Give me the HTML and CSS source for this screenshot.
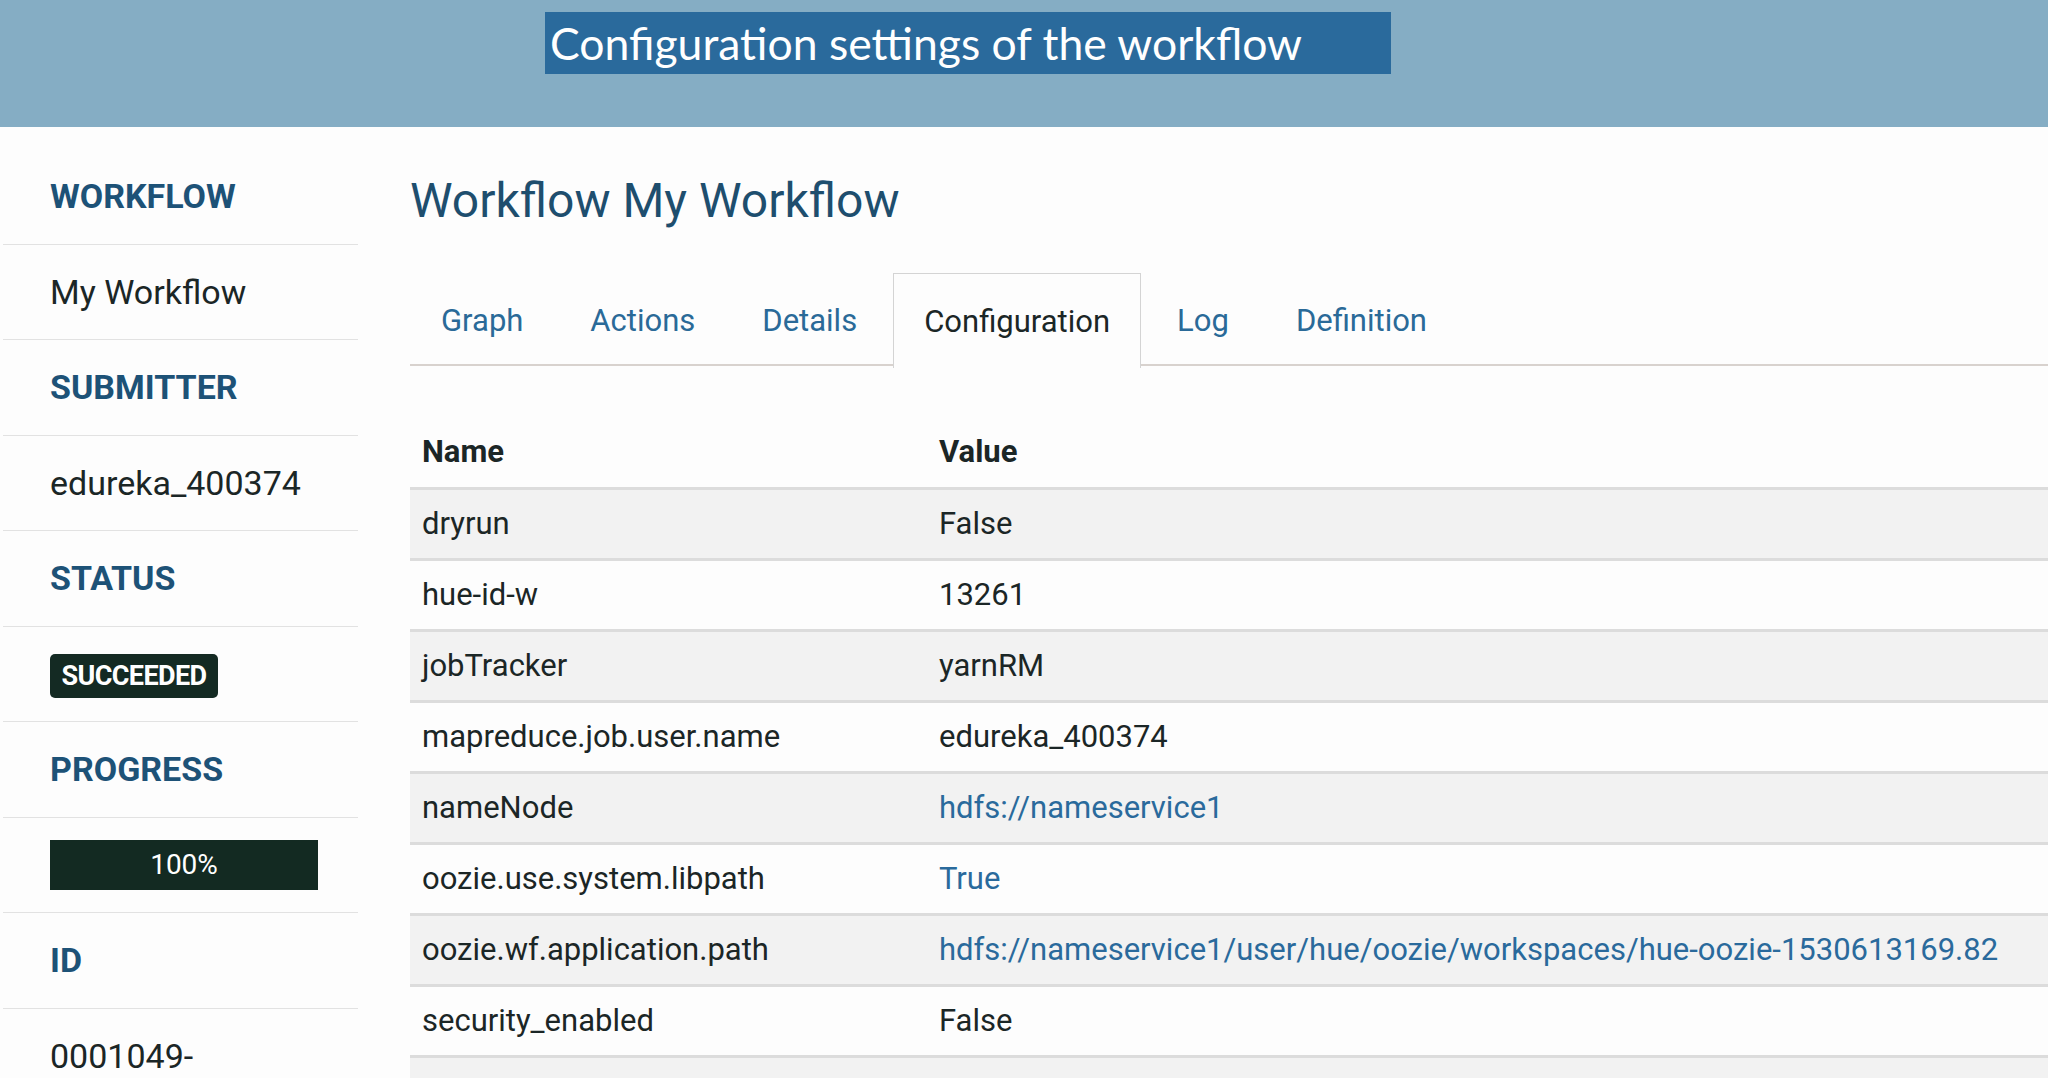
FILE: index.html
```html
<!DOCTYPE html>
<html lang="en">
<head>
<meta charset="utf-8">
<title>Workflow My Workflow</title>
<link rel="stylesheet" href="styles.css">
</head>
<body>
<header class="banner">
  <div class="callout">Configuration settings of the workflow</div>
</header>
<div class="page">
  <aside class="sidebar">
    <div class="item label">WORKFLOW</div>
    <div class="item value">My Workflow</div>
    <div class="item label">SUBMITTER</div>
    <div class="item value">edureka_400374</div>
    <div class="item label">STATUS</div>
    <div class="item badge-row"><span class="badge">SUCCEEDED</span></div>
    <div class="item label">PROGRESS</div>
    <div class="item"><div class="progress">100%</div></div>
    <div class="item label">ID</div>
    <div class="item value">0001049-</div>
  </aside>
  <main class="main">
    <h1 class="title">Workflow My Workflow</h1>
    <ul class="tabs">
      <li class="tab">Graph</li>
      <li class="tab">Actions</li>
      <li class="tab">Details</li>
      <li class="tab active">Configuration</li>
      <li class="tab">Log</li>
      <li class="tab">Definition</li>
    </ul>
    <table class="conf">
      <thead>
        <tr><th class="col-name">Name</th><th>Value</th></tr>
      </thead>
      <tbody>
        <tr><td>dryrun</td><td>False</td></tr>
        <tr><td>hue-id-w</td><td>13261</td></tr>
        <tr><td>jobTracker</td><td>yarnRM</td></tr>
        <tr><td>mapreduce.job.user.name</td><td>edureka_400374</td></tr>
        <tr><td>nameNode</td><td><a class="link">hdfs://nameservice1</a></td></tr>
        <tr><td>oozie.use.system.libpath</td><td><a class="link">True</a></td></tr>
        <tr><td>oozie.wf.application.path</td><td><a class="link">hdfs://nameservice1/user/hue/oozie/workspaces/hue-oozie-1530613169.82</a></td></tr>
        <tr><td>security_enabled</td><td>False</td></tr>
        <tr><td></td><td></td></tr>
      </tbody>
    </table>
  </main>
</div>
</body>
</html>
```

FILE: styles.css
```css
* { box-sizing: border-box; }
html, body {
  margin: 0;
  padding: 0;
  height: 1078px;
  overflow: hidden;
  background: #fdfdfd;
  font-family: Roboto, "Liberation Sans", sans-serif;
  color: #1b2626;
}
.banner {
  height: 127px;
  background: #85adc4;
  padding: 12px 0 0 545px;
}
.callout {
  width: 846px;
  height: 62px;
  background: #2a6a9c;
  color: #ffffff;
  font-family: Lato, "Open Sans", sans-serif;
  font-size: 44.5px;
  line-height: 62px;
  padding-left: 5px;
  white-space: nowrap;
}
.page {
  display: flex;
  gap: 52px;
}
.sidebar {
  width: 358px;
  flex: none;
  padding-top: 22px;
  padding-left: 3px;
}
.item {
  height: 95.5px;
  border-bottom: 1px solid #e2e2e2;
  display: flex;
  align-items: center;
  padding-left: 47px;
}
.label {
  font-weight: 700;
  font-size: 34px;
  color: #1d5277;
}
.value {
  font-size: 34px;
  color: #1b2626;
}
.badge-row {
  padding-top: 5px;
}
.badge {
  display: inline-block;
  width: 168px;
  height: 44px;
  line-height: 44px;
  background: #142a23;
  color: #ffffff;
  font-weight: 700;
  font-size: 27px;
  text-align: center;
  border-radius: 5px;
  letter-spacing: -0.6px;
}
.progress {
  width: 268px;
  height: 50px;
  line-height: 50px;
  background: #132a22;
  color: #ffffff;
  font-size: 28px;
  text-align: center;
}
.main {
  flex: 1;
  min-width: 0;
}
.title {
  margin: 46px 0 0 0;
  font-weight: 400;
  font-size: 48px;
  line-height: 56px;
  color: #1e4e6e;
}
.tabs {
  list-style: none;
  margin: 44px 0 0 0;
  padding: 0;
  display: flex;
  gap: 5px;
  border-bottom: 2px solid #d8d2ce;
  height: 93px;
}
.tab {
  height: 93px;
  padding: 0 30px;
  display: flex;
  align-items: center;
  font-size: 31px;
  color: #2a6a98;
  border: 1px solid transparent;
  border-bottom: none;
}
.tab.active {
  color: #1b2626;
  background: #fdfdfd;
  border-color: #d4d4d4;
  height: 95px;
}
.conf {
  margin-top: 51px;
  width: 100%;
  border-collapse: collapse;
  font-size: 31px;
}
.conf th {
  text-align: left;
  font-weight: 700;
  height: 71px;
  padding: 0 12px;
  color: #1b2626;
  border-bottom: 3px solid #dcdcdc;
}
.conf th.col-name { width: 517px; }
.conf td {
  height: 71px;
  padding: 0 12px;
  border-bottom: 3px solid #dcdcdc;
  white-space: nowrap;
  color: #1b2626;
}
.conf tbody tr:nth-child(odd) td { background: #f2f2f2; }
.link { color: #2a6a9c; text-decoration: none; }
```
